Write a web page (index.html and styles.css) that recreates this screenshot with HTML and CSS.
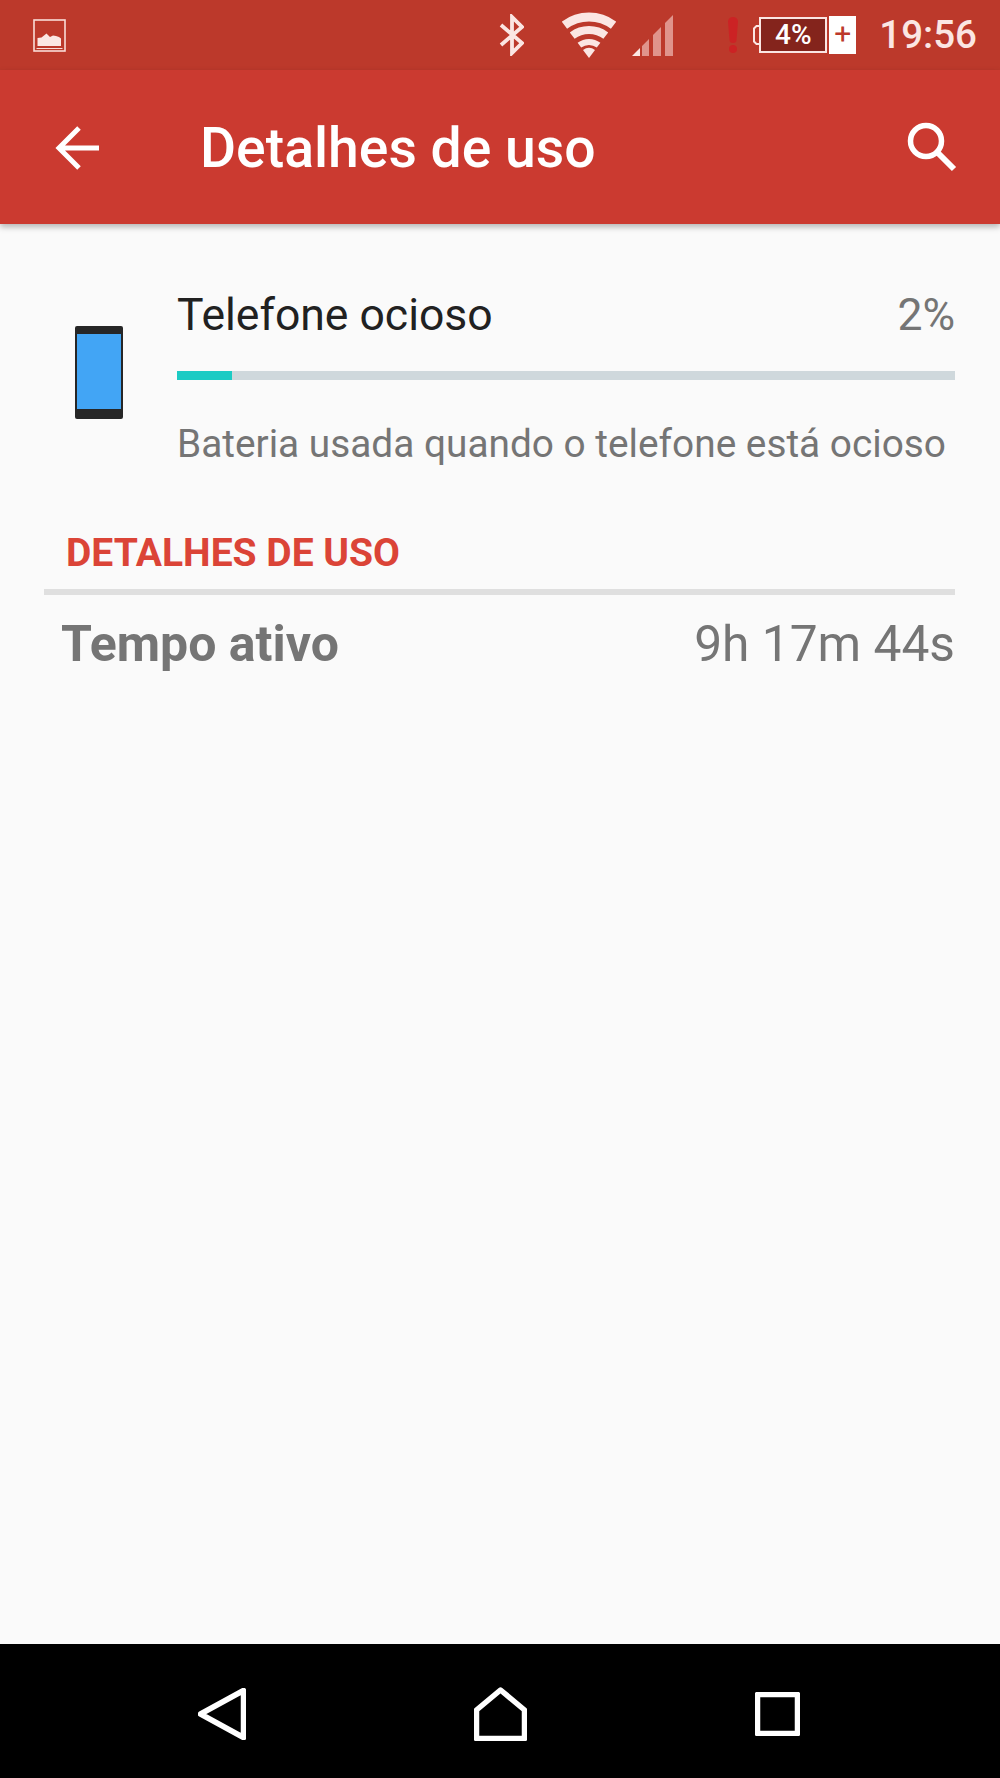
FILE: index.html
```html
<!DOCTYPE html>
<html lang="pt">
<head>
  <meta charset="UTF-8">
  <meta name="viewport" content="width=device-width, initial-scale=1.0">
  <title>Detalhes de uso</title>
  <link rel="stylesheet" href="styles.css">
</head>
<body>
  <div class="screen">
    <div class="status-bar">
      <svg class="ico-image" width="33" height="33" viewBox="0 0 33 33">
        <rect x="1" y="1" width="31" height="31" fill="none" stroke="#f9dcd8" stroke-width="1.6"/>
        <path d="M4.500 27V19l4-.5 2.500-2 2.500-2 3.500 3.500 3-1.500 3 .5 3 1 2 1.500V27z" fill="#fbe6e3"/>
        <path d="M3.500 29.500h26" stroke="#f9dcd8" stroke-width="1"/>
      </svg>
      <div class="status-right">
        <svg class="ico-bt" width="25" height="42" viewBox="0 0 25 42">
          <path d="M2 11l21 18-10 10V3l10 10L2 31" fill="none" stroke="#fbe6e3" stroke-width="3.800"/>
        </svg>
        <svg class="ico-wifi" width="54" height="46" viewBox="0 0 54 46">
          <g fill="none" stroke="#fbe6e3">
            <path d="M2.400 13.200a41 41 0 0 1 49.200 0" stroke-width="9"/>
            <path d="M10.200 23.600a28 28 0 0 1 33.600 0" stroke-width="8"/>
            <path d="M17.400 33.200a16 16 0 0 1 19.200 0" stroke-width="6"/>
          </g>
          <path d="M21 38a10 10 0 0 1 12 0L27 46z" fill="#fbe6e3"/>
        </svg>
        <svg class="ico-signal" width="41" height="41" viewBox="0 0 41 41">
          <path d="M0 41L8 33V41z" fill="#fbe6e3"/>
          <path d="M10 31l7-7V41H10zM21 20l8-8V41H21zM33 8l8-8V41H33z" fill="#e0948c"/>
        </svg>
        <svg class="ico-alert" width="10" height="36" viewBox="0 0 10 36">
          <path d="M0 4.500a5 4.500 0 0 1 10 0L8.500 23a3.500 3 0 0 1-7 0z" fill="#cc2224"/>
          <circle cx="5" cy="32" r="4" fill="#cc2224"/>
        </svg>
        <div class="battery">
          <svg class="ico-nub" width="6" height="20" viewBox="0 0 6 20">
            <path d="M6 1H3.500L1 3.500v13L3.500 19H6" fill="none" stroke="#fbe6e3" stroke-width="2"/>
          </svg>
          <div class="battery-body">4%</div>
        </div>
        <div class="charging">+</div>
        <span class="clock">19:56</span>
      </div>
    </div>

    <div class="app-bar">
      <svg class="ico-back" width="44" height="44" viewBox="0 0 44 44">
        <path d="M44 22H4M24 2L4 22l20 20" fill="none" stroke="#fff" stroke-width="5"/>
      </svg>
      <h1 class="app-title">Detalhes de uso</h1>
      <svg class="ico-search" width="50" height="50" viewBox="0 0 50 50">
        <circle cx="19" cy="19" r="15.500" fill="none" stroke="#fff" stroke-width="5.500"/>
        <path d="M30 30l17 17" stroke="#fff" stroke-width="6"/>
      </svg>
    </div>

    <main class="content">
      <div class="usage">
        <svg class="ico-phone" width="48" height="93" viewBox="0 0 48 93">
          <rect width="48" height="93" rx="2" fill="#262626"/>
          <rect x="2" y="8" width="44" height="75" fill="#42a5f5"/>
        </svg>
        <div class="usage-body">
          <div class="usage-head">
            <span class="usage-name">Telefone ocioso</span>
            <span class="usage-pct">2%</span>
          </div>
          <div class="bar"><div class="bar-fill" style="width: 7.1%"></div></div>
          <p class="usage-desc">Bateria usada quando o telefone está ocioso</p>
        </div>
      </div>

      <h2 class="section-title">DETALHES DE USO</h2>
      <div class="row">
        <span class="row-label">Tempo ativo</span>
        <span class="row-value">9h 17m 44s</span>
      </div>
    </main>

    <div class="nav-bar">
      <svg width="48" height="52" viewBox="0 0 48 52">
        <path d="M45.500 2.500V49.500L2.500 26z" fill="none" stroke="#fff" stroke-width="5.500" stroke-linejoin="round"/>
      </svg>
      <svg width="53" height="54" viewBox="0 0 53 54">
        <path d="M2.500 51.500V23L26.500 3l24 20v28.500z" fill="none" stroke="#fff" stroke-width="5.500" stroke-linejoin="round"/>
      </svg>
      <svg width="45" height="44" viewBox="0 0 45 44">
        <rect x="2.500" y="2.500" width="40" height="39" fill="none" stroke="#fff" stroke-width="5.500" stroke-linejoin="round"/>
      </svg>
    </div>
  </div>
</body>
</html>
```

FILE: styles.css
```css
html, body {
  margin: 0;
  padding: 0;
  font-family: Roboto, 'Liberation Sans', sans-serif;
  background: #fafafa;
}
svg {
  display: block;
  flex: none;
}
.screen {
  display: flex;
  flex-direction: column;
  height: 100vh;
  overflow: hidden;
}
.status-bar {
  display: flex;
  align-items: center;
  height: 70px;
  padding: 0 23px 0 33px;
  background: #bc392b;
}
.status-right {
  display: flex;
  align-items: center;
  margin-left: auto;
}
.ico-wifi { margin-left: 38px; }
.ico-signal { margin-left: 16px; }
.ico-alert { margin-left: 55px; }
.battery {
  display: flex;
  align-items: center;
  margin-left: 15px;
}
.battery-body {
  box-sizing: border-box;
  width: 68px;
  height: 36px;
  border: 2px solid #fbe6e3;
  background: #84241c;
  color: #fff;
  font-size: 28px;
  font-weight: 500;
  line-height: 32px;
  text-align: center;
}
.charging {
  width: 27px;
  height: 38px;
  margin-left: 2px;
  background: #fff;
  color: #bc392b;
  font-size: 30px;
  line-height: 36px;
  text-align: center;
}
.clock {
  margin-left: 23px;
  color: #fbe6e3;
  font-size: 38.5px;
  font-weight: 500;
  line-height: 44px;
}
.app-bar {
  display: flex;
  align-items: center;
  height: 154px;
  padding: 0 43px 0 55px;
  background: #cb3a30;
  box-shadow: 0 3px 6px rgba(0, 0, 0, 0.28);
  position: relative;
}
.ico-back { margin-top: 2px; }
.app-title {
  margin: 4px 0 0 101px;
  color: #fff;
  font-size: 55.3px;
  font-weight: 500;
  line-height: 60px;
}
.ico-search { margin-left: auto; }
.content {
  flex: 1;
  padding: 0 45px 0 44px;
}
.usage {
  display: flex;
  margin-top: 61px;
  padding-left: 31px;
}
.ico-phone { margin-top: 41px; }
.usage-body {
  flex: 1;
  margin-left: 54px;
}
.usage-head {
  display: flex;
  justify-content: space-between;
  font-size: 44.5px;
  line-height: 60px;
}
.usage-name { color: #212121; }
.usage-pct { color: #757575; }
.bar {
  height: 9px;
  margin-top: 26px;
  background: #cfd8dc;
}
.bar-fill {
  height: 100%;
  background: #1ccbc4;
}
.usage-desc {
  margin: 42px 0 0;
  color: #757575;
  font-size: 38.8px;
  line-height: 44px;
}
.section-title {
  margin: 65px 0 0 22px;
  color: #db4437;
  font-size: 39px;
  font-weight: 700;
  line-height: 44px;
}
.row {
  display: flex;
  justify-content: space-between;
  margin-top: 14px;
  padding: 19px 0 0 17px;
  border-top: 6px solid #dfdfdf;
  color: #757575;
  font-size: 50px;
  line-height: 60px;
}
.row-label { font-weight: 700; }
.row-value { font-size: 49.7px; }
.nav-bar {
  display: flex;
  align-items: center;
  justify-content: space-between;
  box-sizing: border-box;
  height: 134px;
  padding: 5px 200px 0 198px;
  background: #000;
}
```
